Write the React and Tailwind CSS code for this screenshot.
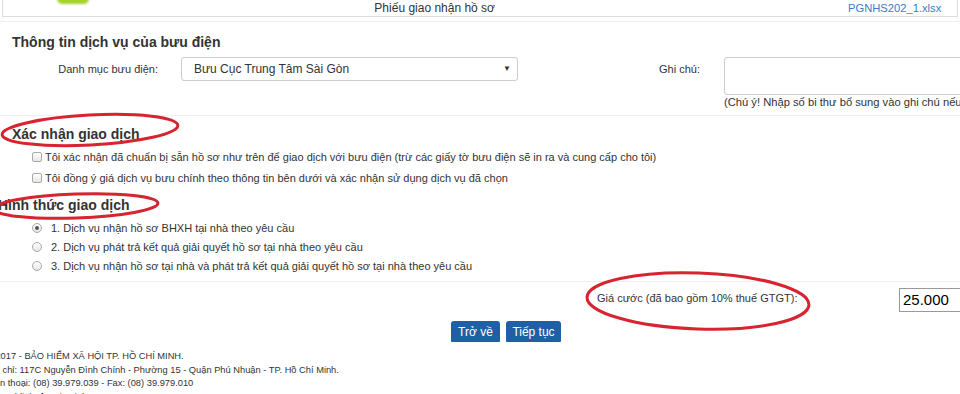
const checks = [
  "Tôi xác nhận đã chuẩn bị sẵn hồ sơ như trên để giao dịch với bưu điện (trừ các giấy tờ bưu điện sẽ in ra và cung cấp cho tôi)",
  "Tôi đồng ý giá dịch vụ bưu chính theo thông tin bên dưới và xác nhận sử dụng dịch vụ đã chọn",
];

const services = [
  "1. Dịch vụ nhận hồ sơ BHXH tại nhà theo yêu cầu",
  "2. Dịch vụ phát trả kết quả giải quyết hồ sơ tại nhà theo yêu cầu",
  "3. Dịch vụ nhận hồ sơ tại nhà và phát trả kết quả giải quyết hồ sơ tại nhà theo yêu cầu",
];

const footer = [
  "© 2017 - BẢO HIỂM XÃ HỘI TP. HỒ CHÍ MINH.",
  "Địa chỉ: 117C Nguyễn Đình Chính - Phường 15 - Quận Phú Nhuận - TP. Hồ Chí Minh.",
  "Điện thoại: (08) 39.979.039 - Fax: (08) 39.979.010",
  "Hỗ trợ kỹ thuật: Gia Linh",
];

const Checkbox = () => (
  <span className="inline-block w-[10px] h-[10px] rounded-[2px] border border-[#a9a9a9] bg-gradient-to-b from-white to-[#e6e6e6] shrink-0" />
);

const Radio = ({ checked }) => (
  <span className="flex items-center justify-center w-[10px] h-[10px] rounded-full border border-[#a9a9a9] bg-gradient-to-b from-white to-[#e6e6e6] shrink-0">
    {checked && <span className="w-[4px] h-[4px] rounded-full bg-[#555]" />}
  </span>
);

export default function App() {
  return (
    <div className="relative w-[960px] h-[394px] overflow-hidden bg-white text-[#333] font-['Liberation_Sans',Arial,sans-serif]">
      {/* file header box */}
      <div className="mx-[2px] h-[17px] border border-t-0 border-[#ddd] flex items-center text-[12px] whitespace-nowrap">
        <div className="w-[492px] shrink-0 text-right">Phiếu giao nhận hồ sơ</div>
        <a className="ml-[353px] text-[11.2px] text-[#3a7cc3]">PGNHS202_1.xlsx</a>
      </div>
      <div className="absolute left-[57px] top-[-7px] w-[32px] h-[11px] rounded-full bg-[#a6d22c] blur-[1px]" />

      <div className="mt-[4px] border-t border-[#eee]" />

      <h3 className="mt-[11px] ml-[12px] text-[14px] leading-[18px] font-bold">Thông tin dịch vụ của bưu điện</h3>

      <div className="mt-[6px] flex items-start text-[11px] whitespace-nowrap">
        <label className="w-[158px] shrink-0 text-right leading-[24px]">Danh mục bưu điện:</label>
        <div className="ml-[23px] w-[337px] shrink-0 h-[24px] border border-[#ccc] rounded-[3px] flex items-center justify-between pl-[12px] pr-[6px] text-[12px]">
          <span>Bưu Cục Trung Tâm Sài Gòn</span>
          <span className="text-[8px]">▼</span>
        </div>
        <label className="ml-[141px] shrink-0 leading-[24px]">Ghi chú:</label>
        <div className="ml-[24px] shrink-0 flex flex-col">
          <div className="w-[260px] h-[38px] border border-[#ccc] rounded-[3px]" />
          <p className="mt-[1px] text-[11.2px] leading-[13px]">(Chú ý! Nhập số bi thư bổ sung vào ghi chú nếu có)</p>
        </div>
      </div>

      <div className="mt-[6px] border-t border-[#eee]" />

      <h3 className="mt-[9px] ml-[12px] text-[14px] leading-[18px] font-bold">Xác nhận giao dịch</h3>
      <div className="mt-[7px] flex flex-col gap-[7px] text-[11px] leading-[14px] whitespace-nowrap">
        {checks.map((t) => (
          <label key={t} className="flex items-center gap-[3px] ml-[32px]">
            <Checkbox />
            <span>{t}</span>
          </label>
        ))}
      </div>

      <h3 className="mt-[11px] ml-[-2px] text-[14px] leading-[18px] font-bold">Hình thức giao dịch</h3>
      <div className="mt-[7px] flex flex-col gap-[5px] text-[11px] leading-[14px] whitespace-nowrap">
        {services.map((t, i) => (
          <label key={t} className="flex items-center gap-[9px] ml-[32px]">
            <Radio checked={i === 0} />
            <span>{t}</span>
          </label>
        ))}
      </div>

      <div className="mt-[8px] border-t border-[#eee]" />

      <div className="mt-[6px] flex items-start pl-[597px] text-[11px] whitespace-nowrap">
        <span className="w-[302px] shrink-0 pt-[3px] leading-[14px]">Giá cước (đã bao gồm 10% thuế GTGT):</span>
        <div className="w-[80px] shrink-0 h-[24px] border border-[#999] border-r-0 pl-[3px] text-[15px] leading-[22px] text-black">25.000</div>
      </div>

      <div className="mt-[9px] flex gap-[6px] pl-[451px]">
        <button className="w-[49px] h-[21px] rounded-t-[3px] rounded-b-[1px] bg-[#1f5fa6] text-white text-[12px]">Trở về</button>
        <button className="w-[55px] h-[21px] rounded-t-[3px] rounded-b-[1px] bg-[#1f5fa6] text-white text-[12px]">Tiếp tục</button>
      </div>

      <div className="mt-[8px] ml-[-14px] text-[9.3px] leading-[13.5px]">
        {footer.map((l) => (
          <p key={l} className="whitespace-nowrap">{l}</p>
        ))}
      </div>

      {/* red hand-drawn marks */}
      <svg className="absolute inset-0 pointer-events-none" width="960" height="394">
        <g fill="none" stroke="#d62430" strokeWidth="3">
          <ellipse cx="90" cy="130" rx="88" ry="15" transform="rotate(-3 90 130)" />
          <ellipse cx="76" cy="206" rx="82" ry="12" transform="rotate(-2 76 206)" />
          <ellipse cx="698" cy="301" rx="111" ry="28" transform="rotate(2 698 301)" />
        </g>
      </svg>
    </div>
  );
}
